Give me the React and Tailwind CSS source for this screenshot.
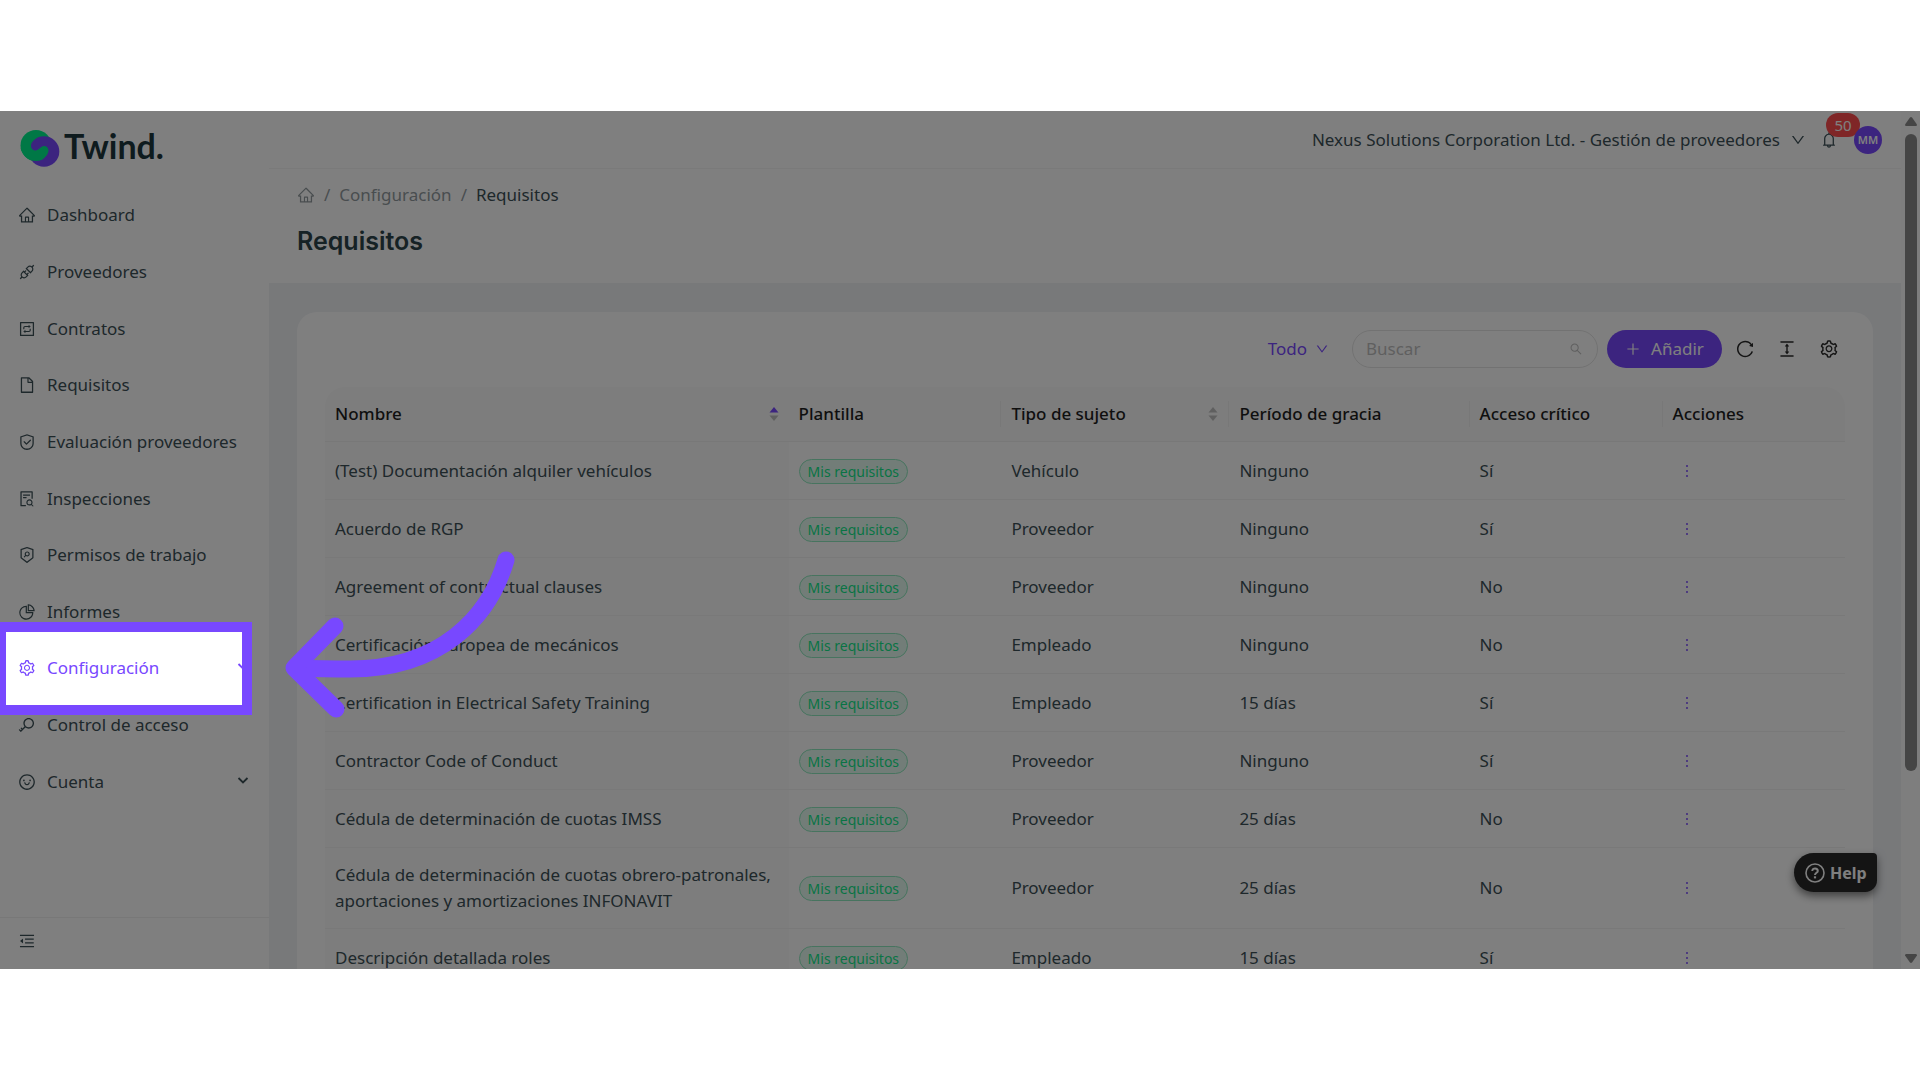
import React from "react";
import {
    AiOutlineApi,
    AiOutlineBell,
    AiOutlineColumnHeight,
    AiOutlineDown,
    AiOutlineFile,
    AiOutlineFileSearch,
    AiOutlineHome,
    AiOutlineInteraction,
    AiOutlineKey,
    AiOutlineMenuFold,
    AiOutlineMore,
    AiOutlinePieChart,
    AiOutlinePlus,
    AiOutlineReload,
    AiOutlineSafety,
    AiOutlineSearch,
    AiOutlineSecurityScan,
    AiOutlineSetting,
    AiOutlineSmile,
} from "react-icons/ai";

const menu = [
    { label: "Dashboard", icon: AiOutlineHome },
    { label: "Proveedores", icon: AiOutlineApi },
    { label: "Contratos", icon: AiOutlineInteraction },
    { label: "Requisitos", icon: AiOutlineFile },
    { label: "Evaluación proveedores", icon: AiOutlineSafety },
    { label: "Inspecciones", icon: AiOutlineFileSearch },
    { label: "Permisos de trabajo", icon: AiOutlineSecurityScan },
    { label: "Informes", icon: AiOutlinePieChart },
    { label: "Configuración", icon: AiOutlineSetting, active: true, submenu: true },
    { label: "Control de acceso", icon: AiOutlineKey },
    { label: "Cuenta", icon: AiOutlineSmile, submenu: true },
];

const rows = [
    ["(Test) Documentación alquiler vehículos", "Vehículo", "Ninguno", "Sí"],
    ["Acuerdo de RGP", "Proveedor", "Ninguno", "Sí"],
    ["Agreement of contractual clauses", "Proveedor", "Ninguno", "No"],
    ["Certificación europea de mecánicos", "Empleado", "Ninguno", "No"],
    ["Certification in Electrical Safety Training", "Empleado", "15 días", "Sí"],
    ["Contractor Code of Conduct", "Proveedor", "Ninguno", "Sí"],
    ["Cédula de determinación de cuotas IMSS", "Proveedor", "25 días", "No"],
    ["Cédula de determinación de cuotas obrero-patronales, aportaciones y amortizaciones INFONAVIT", "Proveedor", "25 días", "No"],
    ["Descripción detallada roles", "Empleado", "15 días", "Sí"],
];

const Logo = () => (
    <a href="#inicio" className="flex items-start gap-1 pl-5 pt-[18px]">
        <svg viewBox="0 0 40 38" className="h-[38px] w-10" aria-hidden="true">
            <clipPath id="disc">
                <circle cx="16" cy="16.500" r="15.500" />
            </clipPath>
            <circle cx="16" cy="16.500" r="15.500" fill="#00f08c" />
            <circle cx="24" cy="22.500" r="15.300" fill="#7848ff" />
            <path
                clipPath="url(#disc)"
                d="M24 17C20.500 17 19 21.500 15.500 21.500A4.500 4.500 0 0 1 11 17C11 13.500 13.500 10 17 8.800L8 8L0 20L10 36L22 31C25 28.500 28.500 25 28.500 21.500A4.500 4.500 0 0 0 24 17Z"
                fill="#00f08c"
            />
        </svg>
        <span className="font-['Lato','Noto_Sans',sans-serif] text-[34px] font-bold leading-[34px] text-[#1c363c]">Twind.</span>
    </a>
);

const Sidebar = () => (
    <aside className="flex w-[269px] shrink-0 flex-col bg-white">
        <div className="h-[76px]">
            <Logo />
        </div>

        <nav className="flex h-[623px] flex-col">
            {menu.map(({ label, icon: Icon, active, submenu }) => (
                <a
                    key={label}
                    href={`#${label}`}
                    className={`flex flex-1 items-center gap-[11px] pl-[18px] pr-5 ${active ? "text-[#7848ff]" : "text-[#3d5057]"}`}
                >
                    <Icon className="size-[18px] shrink-0" />
                    <span className="flex-1">{label}</span>
                    {submenu && (
                        <svg viewBox="0 0 12 12" className="size-3" aria-hidden="true">
                            <path d="M1.500 2L6 6.500L10.500 2" fill="none" stroke="currentColor" strokeWidth="1.800" />
                        </svg>
                    )}
                </a>
            ))}
        </nav>

        <div className="mt-auto h-[52px] border-t border-[#f0f0f0] pl-[18px] pt-[14px]">
            <button aria-label="Contraer menú" className="block text-[#3d5057]">
                <AiOutlineMenuFold className="size-[18px]" />
            </button>
        </div>
    </aside>
);

const TopBar = () => (
    <header className="flex h-[58px] shrink-0 items-center justify-end border-b border-[#f4f4f4] bg-white pr-[19px]">
        <button className="flex items-center gap-[10px] text-[#3d5057]">
            Nexus Solutions Corporation Ltd. - Gestión de proveedores
            <AiOutlineDown className="size-4" />
        </button>
        <button aria-label="Notificaciones, 50" className="relative ml-[14px] text-[#3d5057]">
            <AiOutlineBell className="size-[18px]" />
            <span className="absolute -top-[18px] left-[6px] h-6 w-[34px] rounded-full bg-[#ff4d4f] text-center text-[15px] leading-6 text-white">
                50
            </span>
        </button>
        <button className="relative ml-4 size-7 rounded-full bg-[#7848ff] text-[11px] font-semibold text-white">MM</button>
    </header>
);

const Sorter = ({ active }) => (
    <svg viewBox="0 0 10 16" className="h-4 w-[10px]" aria-hidden="true">
        <path d="M5 1L9.500 6.500H.5Z" fill={active ? "#7848ff" : "#bfbfbf"} />
        <path d="M5 15L.5 9.500H9.500Z" fill="#bfbfbf" />
    </svg>
);

const HeadCell = ({ children, sorter, active, divider, className = "" }) => (
    <th scope="col" className={`h-[55px] border-b border-[#f0f0f0] p-0 text-left font-medium ${className}`}>
        <div className={`flex h-[26px] items-center justify-between px-[10px] ${divider ? "border-r border-[#f0f0f0]" : ""}`}>
            {children}
            {sorter && <Sorter active={active} />}
        </div>
    </th>
);

const Toolbar = () => (
    <div className="flex h-[38px] items-center justify-end">
        <button className="mr-[23px] flex items-center gap-2 text-[#7848ff]">
            Todo
            <AiOutlineDown className="size-[14px]" />
        </button>
        <label className="flex h-[38px] w-[246px] items-center rounded-full border border-[#e4e4e4] pl-[13px] pr-[14px]">
            <input
                type="text"
                placeholder="Buscar"
                aria-label="Buscar"
                className="min-w-0 flex-1 bg-transparent outline-none placeholder:text-[#bfbfbf]"
            />
            <AiOutlineSearch className="size-[14px] text-[#bfbfbf]" />
        </label>
        <button className="ml-[9px] flex h-[38px] w-[115px] items-center justify-center gap-[10px] rounded-full bg-[#7848ff] text-white">
            <AiOutlinePlus className="size-4" />
            Añadir
        </button>
        <div className="ml-[13px] mr-[6px] flex items-center gap-[22px] text-[#2a2a2a]">
            <button aria-label="Recargar"><AiOutlineReload className="block size-5" /></button>
            <button aria-label="Densidad"><AiOutlineColumnHeight className="block size-5" /></button>
            <button aria-label="Ajustes"><AiOutlineSetting className="block size-5" /></button>
        </div>
    </div>
);

const RequirementsTable = () => (
    <table className="mt-[19px] w-full table-fixed border-separate border-spacing-0">
        <colgroup>
            <col className="w-[30.5%]" />
            <col className="w-[14%]" />
            <col className="w-[15%]" />
            <col className="w-[15.8%]" />
            <col className="w-[12.7%]" />
            <col />
        </colgroup>
        <thead className="text-[#1f1f1f] [&_th]:bg-[#fafafa]">
            <tr>
                <HeadCell sorter active className="rounded-tl-[20px]">Nombre</HeadCell>
                <HeadCell divider>Plantilla</HeadCell>
                <HeadCell sorter divider>Tipo de sujeto</HeadCell>
                <HeadCell divider>Período de gracia</HeadCell>
                <HeadCell divider>Acceso crítico</HeadCell>
                <HeadCell className="rounded-tr-[20px]">Acciones</HeadCell>
            </tr>
        </thead>
        <tbody className="text-[#3d5057] [&_td]:h-[58px] [&_td]:border-b [&_td]:border-[#f2f2f2] [&_td]:px-[10px] [&_td]:py-[14px]">
            {rows.map(([name, subject, grace, critical]) => (
                <tr key={name}>
                    <td className="bg-[#fafafa]">{name}</td>
                    <td>
                        <span className="inline-block rounded-full border border-[#8fe8be] bg-[#e4fbf0] px-2 align-middle text-[14px] leading-[23px] text-[#12e88a]">
                            Mis requisitos
                        </span>
                    </td>
                    <td>{subject}</td>
                    <td>{grace}</td>
                    <td>{critical}</td>
                    <td>
                        <button aria-label={`Acciones de ${name}`} className="ml-[5px] block text-[#7848ff]">
                            <AiOutlineMore className="size-[18px]" />
                        </button>
                    </td>
                </tr>
            ))}
        </tbody>
    </table>
);

const Content = () => (
    <main className="min-h-0 flex-1 bg-[#f0f2f5]">
        <div className="h-[114px] bg-white px-7 pt-[13px]">
            <nav aria-label="Ruta" className="flex items-center gap-[9px] text-[#929b9f]">
                <a href="#inicio" aria-label="Inicio"><AiOutlineHome className="size-[18px]" /></a>
                <span>/</span>
                <a href="#configuracion">Configuración</a>
                <span>/</span>
                <span className="text-[#3d5057]">Requisitos</span>
            </nav>
            <h1 className="mt-[17px] font-['Inter','Noto_Sans',sans-serif] text-[25px] font-semibold leading-8 text-[#2c444b]">Requisitos</h1>
        </div>

        <section className="mx-7 mt-[29px] rounded-[20px] bg-white px-7 pt-[18px]">
            <Toolbar />
            <RequirementsTable />
        </section>
    </main>
);

const ScrollBar = () => (
    <div className="flex w-[19px] shrink-0 flex-col items-center bg-[#fcfcfc] py-[6px]" aria-hidden="true">
        <svg viewBox="0 0 12 9" className="h-[9px] w-3 fill-[#8b8b8b]">
            <path d="M5 .5Q6 -.3 7 .5L12 7.500Q12 9 11 9H1Q0 9 0 7.500Z" />
        </svg>
        <div className="mt-2 h-[637px] w-3 rounded-full bg-[#8b8b8b]" />
        <svg viewBox="0 0 12 9" className="mt-auto h-[9px] w-3 fill-[#8b8b8b]">
            <path d="M5 8.500Q6 9.300 7 8.500L12 1.500Q12 0 11 0H1Q0 0 0 1.500Z" />
        </svg>
    </div>
);

const HelpButton = () => (
    <button className="absolute bottom-[77px] right-[43px] flex h-[39px] w-[83px] items-center gap-[5px] rounded-l-[20px] rounded-br-[12px] rounded-tr-[4px] bg-[#282828] pl-[11px] text-[16px] font-bold text-white shadow-[0_4px_8px_rgba(0,0,0,0.5)]">
        <svg viewBox="0 0 20 20" className="size-5" fill="none" stroke="currentColor" aria-hidden="true">
            <circle cx="10" cy="10" r="9" strokeWidth="1.600" />
            <path d="M7.300 8C7.300 4.500 12.800 4.700 12.800 7.900C12.800 9.900 10 9.700 10 12" strokeWidth="2" />
            <path d="M10 13.300V15.400" strokeWidth="2.200" />
        </svg>
        Help
    </button>
);

// Dims everything except the highlighted menu entry
const Spotlight = () => (
    <>
        <div className="pointer-events-none absolute left-[-4px] top-[511px] h-[93px] w-[256px] border-[10px] border-[#7848ff] shadow-[0_0_0_2500px_rgba(0,0,0,0.5)]" />
        <svg
            viewBox="280 545 240 180"
            className="pointer-events-none absolute left-[280px] top-[434px] h-[180px] w-[240px]"
            fill="none"
            stroke="#7848ff"
            strokeWidth="17"
            strokeLinecap="round"
            strokeLinejoin="round"
            aria-hidden="true"
        >
            <path d="M506 560C489 618 440 669 350 669Q325 669 296 668" />
            <path d="M335 626L294 668L336 709" />
        </svg>
    </>
);

const App = () => {
    return (
        <div className="flex h-screen flex-col bg-white py-[111px] font-['Noto_Sans',sans-serif] text-[17px] leading-[26px]">
            <div className="relative flex min-h-0 flex-1 overflow-hidden">
                <Sidebar />
                <div className="flex min-w-0 flex-1 flex-col">
                    <TopBar />
                    <Content />
                </div>
                <ScrollBar />
                <HelpButton />
                <Spotlight />
            </div>
        </div>
    );
};

export default App;
